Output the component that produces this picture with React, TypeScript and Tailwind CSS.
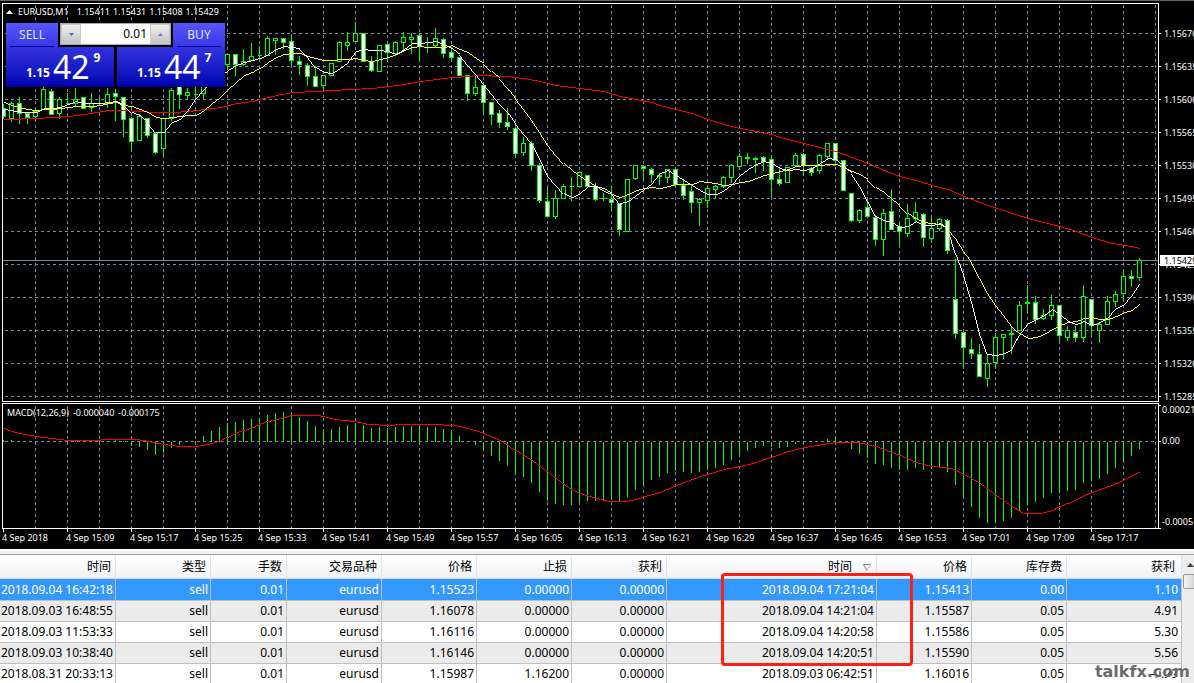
import { clsx } from 'clsx';
import { useState } from 'react';

// high, low, body top, body bottom, filled (1) or hollow (0)
type Candle = [number, number, number, number, 0 | 1];
type Point = [number, number];

const STEP = 8;
const LEFT = 3;

const candles: Candle[] = [
  [104, 119, 108, 117, 1], [102, 122, 103, 119, 0], [97, 124, 103, 114, 1], [112, 124, 113, 118, 1],
  [111, 119, 111, 117, 0], [86, 110, 89, 110, 0], [89, 115, 91, 115, 1], [97, 119, 99, 114, 0],
  [93, 105, 103, 104, 0], [88, 106, 99, 104, 0], [97, 109, 97, 109, 1], [93, 112, 103, 108, 0],
  [98, 105, 103, 104, 0], [88, 108, 94, 104, 0], [89, 121, 93, 97, 1], [97, 137, 97, 120, 1],
  [117, 152, 118, 142, 1], [114, 141, 116, 141, 0], [118, 138, 118, 136, 1], [133, 154, 133, 153, 1],
  [118, 156, 118, 149, 0], [88, 121, 90, 119, 0], [78, 109, 80, 95, 1], [88, 100, 92, 96, 0],
  [80, 99, 94, 95, 0], [60, 99, 62, 94, 0], [60, 80, 62, 76, 0], [56, 72, 58, 70, 1],
  [54, 70, 54, 65, 0], [54, 76, 54, 65, 1], [49, 66, 61, 65, 0], [43, 61, 56, 61, 0],
  [46, 59, 55, 56, 0], [36, 56, 38, 56, 0], [38, 55, 38, 41, 0], [38, 49, 38, 43, 1],
  [34, 65, 41, 61, 1], [56, 75, 61, 65, 1], [63, 86, 65, 77, 1], [66, 87, 76, 87, 1],
  [75, 92, 75, 86, 0], [63, 76, 63, 76, 0], [41, 62, 42, 62, 0], [32, 51, 42, 46, 0],
  [22, 42, 33, 42, 0], [33, 62, 33, 62, 1], [56, 72, 61, 71, 1], [45, 72, 45, 72, 0],
  [44, 61, 44, 53, 1], [41, 56, 42, 54, 0], [32, 52, 37, 43, 0], [33, 54, 37, 40, 0],
  [34, 61, 35, 47, 1], [37, 53, 47, 48, 0], [28, 48, 38, 46, 0], [38, 58, 39, 54, 1],
  [47, 60, 52, 58, 1], [57, 76, 57, 76, 1], [75, 101, 75, 94, 1], [75, 96, 87, 94, 0],
  [82, 113, 85, 103, 1], [102, 125, 102, 115, 1], [110, 128, 113, 123, 1], [108, 130, 122, 127, 1],
  [127, 158, 128, 154, 1], [137, 156, 143, 153, 0], [141, 171, 143, 166, 1], [163, 203, 165, 201, 1],
  [188, 217, 201, 217, 1], [190, 219, 198, 217, 0], [184, 199, 186, 199, 0], [177, 201, 186, 187, 0],
  [171, 187, 172, 187, 0], [175, 187, 175, 187, 1], [183, 201, 186, 200, 1], [193, 201, 198, 199, 0],
  [186, 210, 199, 203, 1], [203, 236, 203, 230, 1], [179, 232, 179, 232, 0], [165, 180, 165, 179, 0],
  [165, 180, 166, 169, 1], [168, 183, 169, 175, 1], [173, 185, 175, 177, 0], [169, 183, 169, 178, 0],
  [168, 185, 169, 185, 1], [179, 200, 185, 196, 1], [185, 213, 191, 203, 1], [198, 226, 199, 203, 0],
  [187, 208, 188, 201, 0], [185, 198, 186, 190, 0], [176, 188, 177, 187, 0], [164, 183, 165, 178, 0],
  [153, 169, 156, 167, 0], [153, 164, 157, 159, 0], [157, 173, 158, 160, 0], [156, 171, 157, 162, 1],
  [155, 197, 159, 180, 1], [167, 186, 179, 184, 1], [167, 183, 167, 183, 0], [153, 166, 155, 166, 0],
  [153, 176, 154, 166, 1], [167, 176, 168, 173, 1], [154, 174, 155, 171, 0], [143, 159, 143, 157, 0],
  [143, 161, 143, 161, 1], [160, 191, 160, 191, 1], [193, 222, 193, 221, 1], [209, 223, 210, 221, 0],
  [199, 218, 207, 217, 1], [215, 246, 217, 240, 1], [209, 256, 213, 240, 0], [189, 230, 211, 230, 1],
  [223, 246, 226, 232, 1], [204, 237, 218, 234, 0], [202, 222, 212, 219, 0], [213, 247, 214, 238, 1],
  [217, 243, 228, 239, 0], [218, 231, 219, 229, 0], [219, 254, 220, 251, 1], [259, 339, 299, 334, 1],
  [332, 369, 332, 348, 1], [338, 359, 349, 354, 1], [344, 377, 354, 377, 1], [354, 387, 363, 379, 0],
  [333, 369, 337, 363, 0], [334, 359, 334, 338, 0], [327, 354, 333, 335, 0], [301, 331, 305, 331, 0],
  [285, 313, 302, 304, 0], [296, 324, 302, 320, 1], [309, 320, 315, 319, 0], [295, 320, 305, 316, 0],
  [305, 342, 305, 336, 1], [326, 341, 330, 338, 0], [326, 342, 332, 338, 1], [285, 342, 296, 338, 0],
  [299, 336, 299, 326, 1], [322, 343, 324, 331, 0], [296, 325, 301, 325, 0], [291, 307, 294, 302, 0],
  [270, 301, 276, 294, 0], [270, 287, 276, 279, 1], [258, 281, 260, 278, 0],
];

const fastMa = [
  109, 110, 112, 112, 112, 108, 108, 107, 104, 101, 103, 103, 103, 102, 101, 104, 112, 115, 122, 132,
  132, 122, 119, 110, 98, 89, 82, 76, 70, 65, 62, 60, 58, 54, 49, 46, 47, 48, 56, 67,
  72, 73, 68, 62, 51, 49, 50, 50, 51, 54, 49, 43, 43, 42, 41, 44, 48, 54, 64, 73,
  83, 93, 103, 111, 123, 133, 142, 157, 175, 184, 193, 197, 193, 186, 186, 188, 193, 203, 201, 195,
  189, 183, 173, 170, 175, 180, 185, 190, 194, 194, 190, 184, 175, 169, 164, 161, 163, 168, 170, 169,
  170, 168, 163, 158, 159, 166, 173, 185, 200, 216, 220, 222, 227, 226, 221, 225, 225, 223, 228, 253,
  274, 301, 333, 354, 355, 353, 349, 334, 323, 319, 315, 309, 314, 321, 324, 321, 325, 322, 317, 308,
  304, 295, 283,
];

const midMa = [
  102, 105, 107, 109, 110, 109, 109, 108, 107, 106, 106, 106, 105, 103, 102, 105, 106, 109, 112, 117,
  118, 117, 116, 115, 115, 110, 103, 97, 89, 82, 75, 72, 68, 62, 57, 54, 53, 53, 56, 58,
  60, 60, 59, 59, 58, 60, 61, 59, 57, 54, 50, 47, 46, 47, 47, 47, 45, 49, 52, 58,
  63, 71, 78, 87, 98, 108, 119, 131, 144, 154, 163, 170, 176, 181, 186, 191, 194, 197, 194, 190,
  188, 187, 188, 186, 184, 184, 184, 181, 182, 183, 185, 184, 182, 181, 178, 175, 173, 171, 169, 166,
  165, 165, 165, 164, 164, 167, 171, 174, 179, 187, 192, 199, 205, 213, 218, 222, 223, 224, 228, 237,
  250, 262, 277, 292, 304, 314, 325, 333, 338, 337, 334, 329, 325, 322, 321, 318, 317, 319, 319, 316,
  312, 310, 303,
];

const slowMa: Point[] = [
  [3, 119], [35, 118], [51, 117], [67, 116], [83, 114], [107, 110], [123, 110], [139, 111], [155, 112],
  [171, 112], [187, 111], [203, 109], [219, 107], [235, 103], [251, 101], [267, 97], [275, 95], [291, 92],
  [315, 91], [331, 90], [347, 89], [371, 88], [387, 86], [403, 84], [419, 81], [435, 79], [451, 77],
  [467, 76], [475, 75], [507, 76], [523, 78], [539, 81], [555, 85], [571, 87], [587, 89], [603, 91],
  [619, 96], [635, 99], [651, 102], [659, 105], [675, 109], [691, 113], [707, 119], [723, 124], [739, 128],
  [755, 131], [771, 134], [779, 137], [803, 143], [819, 147], [835, 151], [851, 157], [867, 163],
  [883, 170], [899, 176], [915, 180], [931, 185], [947, 189], [963, 196], [987, 205], [1011, 213],
  [1035, 220], [1059, 226], [1075, 231], [1091, 237], [1107, 242], [1123, 245], [1131, 246], [1139, 248],
];

const histogram = [
  439, 439, 440, 441, 441, 440, 441, 440, 441, 439, 440, 440, 440, 440, 438, 440, 445, 446, 449, 454,
  452, 447, 444, 441, 440, 435, 430, 426, 422, 421, 419, 418, 417, 414, 412, 411, 413, 416, 420, 425,
  428, 428, 426, 424, 422, 424, 427, 426, 427, 426, 425, 425, 425, 426, 426, 428, 429, 435, 441, 444,
  450, 455, 460, 465, 473, 476, 482, 491, 500, 503, 504, 504, 501, 500, 500, 499, 499, 501, 496, 489,
  483, 479, 476, 472, 470, 471, 472, 471, 469, 467, 464, 459, 454, 450, 447, 445, 446, 447, 446, 443,
  442, 441, 441, 438, 436, 441, 448, 453, 457, 463, 464, 467, 469, 469, 467, 469, 468, 467, 471, 484,
  496, 506, 517, 522, 522, 520, 517, 511, 504, 501, 497, 492, 492, 490, 489, 482, 480, 478, 473, 467,
  460, 455, 448,
];

const signal: Point[] = [
  [3, 428], [11, 431], [19, 433], [35, 436], [51, 438], [67, 440], [91, 440], [107, 439], [135, 439],
  [147, 441], [163, 444], [179, 446], [195, 446], [211, 443], [219, 440], [226, 437], [236, 432], [252, 427],
  [267, 421], [280, 418], [290, 415], [318, 415], [333, 419], [353, 421], [367, 424], [387, 425], [400, 424],
  [432, 424], [453, 425], [467, 428], [480, 432], [499, 440], [515, 450], [531, 460], [547, 472], [567, 487],
  [579, 493], [595, 498], [608, 501], [623, 501], [635, 499], [643, 496], [659, 492], [675, 485], [699, 476],
  [723, 469], [739, 466], [755, 462], [773, 456], [787, 451], [803, 447], [816, 445], [835, 442], [856, 442],
  [875, 446], [899, 455], [915, 462], [931, 466], [951, 468], [963, 474], [979, 483], [995, 495], [1011, 506],
  [1023, 513], [1039, 513], [1051, 510], [1067, 503], [1083, 495], [1115, 483], [1139, 471],
];

const prices = [
  '1.15670', '1.15635', '1.15600', '1.15565', '1.15530', '1.15495',
  '1.15460', '1.15425', '1.15390', '1.15355', '1.15320', '1.15285',
];

const times = [
  '2018', '15:09', '15:17', '15:25', '15:33', '15:41', '15:49', '15:57', '16:05',
  '16:13', '16:21', '16:29', '16:37', '16:45', '16:53', '17:01', '17:09', '17:17',
];

const headers = ['时间', '类型', '手数', '交易品种', '价格', '止损', '获利', '时间', '价格', '库存费', '获利'];

const columns = [
  'w-[116px]', 'w-[95px]', 'w-[76px]', 'w-[95px]', 'w-[95px]', 'w-[95px]',
  'w-[95px]', 'w-[210px]', 'w-[95px]', 'w-[95px]', '',
];

const orders = [
  ['2018.09.04 16:42:18', 'sell', '0.01', 'eurusd', '1.15523', '0.00000', '0.00000', '2018.09.04 17:21:04', '1.15413', '0.00', '1.10'],
  ['2018.09.03 16:48:55', 'sell', '0.01', 'eurusd', '1.16078', '0.00000', '0.00000', '2018.09.04 14:21:04', '1.15587', '0.05', '4.91'],
  ['2018.09.03 11:53:33', 'sell', '0.01', 'eurusd', '1.16116', '0.00000', '0.00000', '2018.09.04 14:20:58', '1.15586', '0.05', '5.30'],
  ['2018.09.03 10:38:40', 'sell', '0.01', 'eurusd', '1.16146', '0.00000', '0.00000', '2018.09.04 14:20:51', '1.15590', '0.05', '5.56'],
  ['2018.08.31 20:33:13', 'sell', '0.01', 'eurusd', '1.15987', '1.16200', '0.00000', '2018.09.03 06:42:51', '1.16016', '0.05', '-0.29'],
];

const toPoints = (ys: number[]) => ys.map((y, i) => `${LEFT + i * STEP},${y}`).join(' ');
const joinPoints = (points: Point[]) => points.map((p) => p.join(',')).join(' ');

function GridColumns({ top, bottom }: { top: number; bottom: number }) {
  return (
    <g stroke="#778899" strokeDasharray="3 3">
      {Array.from({ length: 36 }, (_, i) => (
        <line key={i} x1={35 + i * 32} x2={35 + i * 32} y1={top} y2={bottom} />
      ))}
    </g>
  );
}

function PriceChart() {
  return (
    <svg className="block h-full w-full" shapeRendering="crispEdges" fill="none" aria-label="EURUSD M1">
      <g transform="translate(-2.5 -3.5)">
        <GridColumns top={4} bottom={401} />
        <g stroke="#778899" strokeDasharray="3 3">
          {prices.map((price, i) => (
            <line key={price} x1="4" x2="100%" y1={33 + i * 33} y2={33 + i * 33} />
          ))}
        </g>
        <line x1="0" x2="110%" y1="260" y2="260" stroke="#778899" />
        <g stroke="#00ff00" strokeLinecap="square">
          {candles.map(([high, low, top, bottom, filled], i) => {
            const x = LEFT + i * STEP;
            return (
              <g key={i}>
                <path d={`M${x} ${high}V${low - 1}`} />
                <path d={`M${x - 2} ${top}h4V${bottom - 1}h-4z`} fill={filled ? '#fff' : '#000'} />
              </g>
            );
          })}
        </g>
        {/* just under 1 so the averages stay hairlines on the steep parts */}
        <g strokeWidth="0.99">
          <polyline points={joinPoints(slowMa)} stroke="#ff0000" />
          <polyline points={toPoints(midMa)} stroke="#ffff00" />
          <polyline points={toPoints(fastMa)} stroke="#ffffff" />
        </g>
      </g>
    </svg>
  );
}

function MacdChart() {
  return (
    <svg className="block h-full w-full" shapeRendering="crispEdges" fill="none" aria-label="MACD">
      <g transform="translate(-2.5 -403.5)">
        <GridColumns top={405} bottom={528} />
        <line x1="4" x2="100%" y1="441" y2="441" stroke="#778899" strokeDasharray="3 3" />
        {histogram.map((y, i) => (
          <path key={i} d={`M${LEFT + i * STEP} 441V${y}`} stroke="#00ff00" />
        ))}
        <polyline points={joinPoints(signal)} stroke="#ff0000" strokeWidth="0.99" />
      </g>
    </svg>
  );
}

interface IDealProps {
  side: 'SELL' | 'BUY';
  pips: string;
  point: string;
}

function DealButton({ side, pips, point }: IDealProps) {
  return (
    <button
      type="button"
      className={clsx('flex flex-1 flex-col text-white', side === 'BUY' ? 'items-end' : 'items-start')}
    >
      <span className="flex h-6 w-[52px] flex-col bg-linear-to-b from-[#5656ff] to-[#3838e4] px-1">
        <span className="flex-1 text-center text-xs leading-[23px] text-[#dfe4ff]">{side}</span>
        <span className="h-px bg-[#0000a0]" />
        <span className="h-px bg-[#7070ff]" />
      </span>
      <span className="flex h-10 w-full border-b border-[#000090] bg-linear-to-b from-[#3232de] to-[#0000b0] pl-5">
        <span className="pt-[18px] text-xs leading-4 font-bold">1.15</span>
        <span className="pl-[3px] text-[32px] leading-10">{pips}</span>
        <span className="pt-[3px] pl-1 text-xs leading-4 font-bold">{point}</span>
      </span>
    </button>
  );
}

function OneClickPanel() {
  const [volume, setVolume] = useState<number>(0.01);
  const spinStyle =
    'flex w-5 items-center justify-center border border-[#c8c8c8] bg-linear-to-b from-[#f0f0f0] to-[#c4c4c4]';

  return (
    <div className="absolute top-[19px] left-[3px] flex w-[219px] gap-[3px] bg-black font-['Noto_Sans',sans-serif]">
      <DealButton side="SELL" pips="42" point="9" />
      <DealButton side="BUY" pips="44" point="7" />
      <div className="absolute inset-x-[54px] top-0 flex h-[22px] border border-[#a8a8a8] bg-white">
        <button
          type="button"
          aria-label="Decrease volume"
          className={spinStyle}
          onClick={() => setVolume(Math.max(0.01, volume - 0.01))}
        >
          <svg width="5" height="3" viewBox="0 0 5 3">
            <path d="M0 0h5L2.500 3z" fill="#4a69b0" />
          </svg>
        </button>
        <input
          aria-label="Volume"
          readOnly
          value={volume.toFixed(2)}
          className="min-w-0 flex-1 bg-white pr-[3px] text-right text-xs text-black outline-none"
        />
        <button
          type="button"
          aria-label="Increase volume"
          className={spinStyle}
          onClick={() => setVolume(volume + 0.01)}
        >
          <svg width="5" height="3" viewBox="0 0 5 3">
            <path d="M0 3h5L2.500 0z" fill="#6a7fb4" />
          </svg>
        </button>
      </div>
    </div>
  );
}

function Chart() {
  return (
    <section className="shrink-0 border-t border-[#646464] bg-black pt-[2px] pl-[2px] font-['Noto_Sans',sans-serif] text-[9px] text-white">
      <div className="flex h-[399px]">
        <div className="relative min-w-0 flex-1 overflow-hidden border border-white">
          <PriceChart />
          <div className="absolute top-[2px] left-[3px] flex items-center leading-[11px]">
            <svg className="mr-[5px]" width="7" height="4" viewBox="0 0 7 4">
              <path d="M0 4h7L3.500 0z" fill="#fff" />
            </svg>
            <span className="mr-2">EURUSD,M1</span>
            <span className="flex gap-[3px]">
              <span>1.15411</span>
              <span>1.15431</span>
              <span>1.15408</span>
              <span>1.15429</span>
            </span>
          </div>
          <OneClickPanel />
        </div>
        <div className="relative w-[35px] overflow-hidden pt-[14px]">
          {prices.map((price) => (
            <div key={price} className="flex h-[33px] items-center gap-[3px]">
              <span className="h-px w-[2px] shrink-0 bg-white" />
              {price}
            </div>
          ))}
          <div className="absolute top-[252px] left-px h-[11px] w-[34px] overflow-hidden bg-white pl-1 leading-[11px] text-black">
            1.15429
          </div>
        </div>
      </div>

      <div className="mt-px flex h-[126px]">
        <div className="relative min-w-0 flex-1 overflow-hidden border border-white">
          <MacdChart />
          <div className="absolute top-[3px] left-1 flex gap-1 leading-[11px]">
            <span>MACD(12,26,9)</span>
            <span>-0.000040</span>
            <span>-0.000175</span>
          </div>
        </div>
        <div className="flex w-[35px] flex-col overflow-hidden leading-[14px] whitespace-nowrap">
          <div className="flex gap-px">
            <span className="mt-[2px] h-px w-[2px] shrink-0 bg-white" />
            0.00021
          </div>
          <div className="mt-[17px] flex items-center gap-px">
            <span className="h-px w-[2px] shrink-0 bg-white" />
            0.00
          </div>
          <div className="mt-auto flex items-end gap-px">
            <span className="h-px w-[2px] shrink-0 bg-white" />
            -0.0005
          </div>
        </div>
      </div>

      <div className="flex h-5 overflow-hidden">
        {times.map((time) => (
          <div key={time} className="w-16 shrink-0 whitespace-nowrap">
            <div className="ml-px h-[3px] w-px bg-white" />
            <div className="leading-[11px]">4 Sep {time}</div>
          </div>
        ))}
      </div>
    </section>
  );
}

function History() {
  return (
    <section className="relative flex min-h-0 flex-1 items-start overflow-hidden bg-white font-['Noto_Sans','Noto_Sans_CJK_SC',sans-serif] text-xs text-black">
      <table className="min-w-0 flex-1 table-fixed border-separate border-spacing-0 text-right whitespace-nowrap">
        <colgroup>
          {columns.map((width, i) => (
            <col key={i} className={width} />
          ))}
        </colgroup>
        <thead>
          <tr className="h-6 bg-linear-to-b from-white to-[#f0f1f3]">
            {headers.map((header, i) => (
              <th
                key={i}
                scope="col"
                className={clsx(
                  'border-r border-b border-r-[#e4e4e6] border-b-[#d5d5d5] py-0 leading-[23px] font-normal',
                  i === 10 ? 'pr-[6px]' : i === 7 ? 'pr-[5px]' : 'pr-1'
                )}
              >
                {header}
                {i === 7 && (
                  <svg className="ml-[11px] inline" width="8" height="7" viewBox="0 0 8 7" fill="none">
                    <path d="M7.500 .5H.5L4 6.500" stroke="#808080" />
                    <path d="M7.500 .5L4 6.500" stroke="#c0c0c0" />
                  </svg>
                )}
              </th>
            ))}
          </tr>
        </thead>
        <tbody>
          {orders.map((order, row) => (
            <tr
              key={order[0]}
              className={clsx(
                row === 0 ? 'h-[22px] bg-[#3399ff] text-white' : 'h-[21px]',
                row % 2 === 1 && 'bg-[#ebebeb]'
              )}
            >
              {order.map((value, i) => (
                <td
                  key={i}
                  className={clsx(
                    'border-r border-b border-[#c0c0c0] py-0 pl-0 leading-5',
                    i === 10 ? 'pr-[3px]' : 'pr-[2px]'
                  )}
                >
                  {value}
                </td>
              ))}
            </tr>
          ))}
        </tbody>
      </table>

      <div className="flex w-3 flex-col self-stretch overflow-hidden bg-[#ededed]">
        <button type="button" aria-label="Scroll up" className="flex h-[19px] shrink-0 items-center pl-[5px]">
          <svg className="shrink-0" width="7" height="4" viewBox="0 0 7 4">
            <path d="M0 4h7L3.500 0z" fill="#404040" />
          </svg>
        </button>
        <div className="ml-px h-[15px] w-[15px] shrink-0 rounded-xs border border-[#979797] bg-linear-to-r from-[#f5f5f5] to-[#cfcfcf]" />
      </div>

      <div className="absolute top-[18px] left-[721px] h-[93px] w-[192px] rounded-sm border-3 border-[#ff2015]" />
      <div className="absolute right-1 bottom-0 font-['DejaVu_Sans',sans-serif] text-base leading-[22px] font-bold text-[#6a6a6a] [text-shadow:1px_1px_0_#fff]">
        talkfx.com
      </div>
    </section>
  );
}

export default function App() {
  return (
    <main className="flex h-screen flex-col overflow-hidden bg-white">
      <Chart />
      <div className="h-[6px] shrink-0 border-t-2 border-b border-t-white border-b-[#a0a0a0] bg-[#f0f0f0]" />
      <History />
    </main>
  );
}
